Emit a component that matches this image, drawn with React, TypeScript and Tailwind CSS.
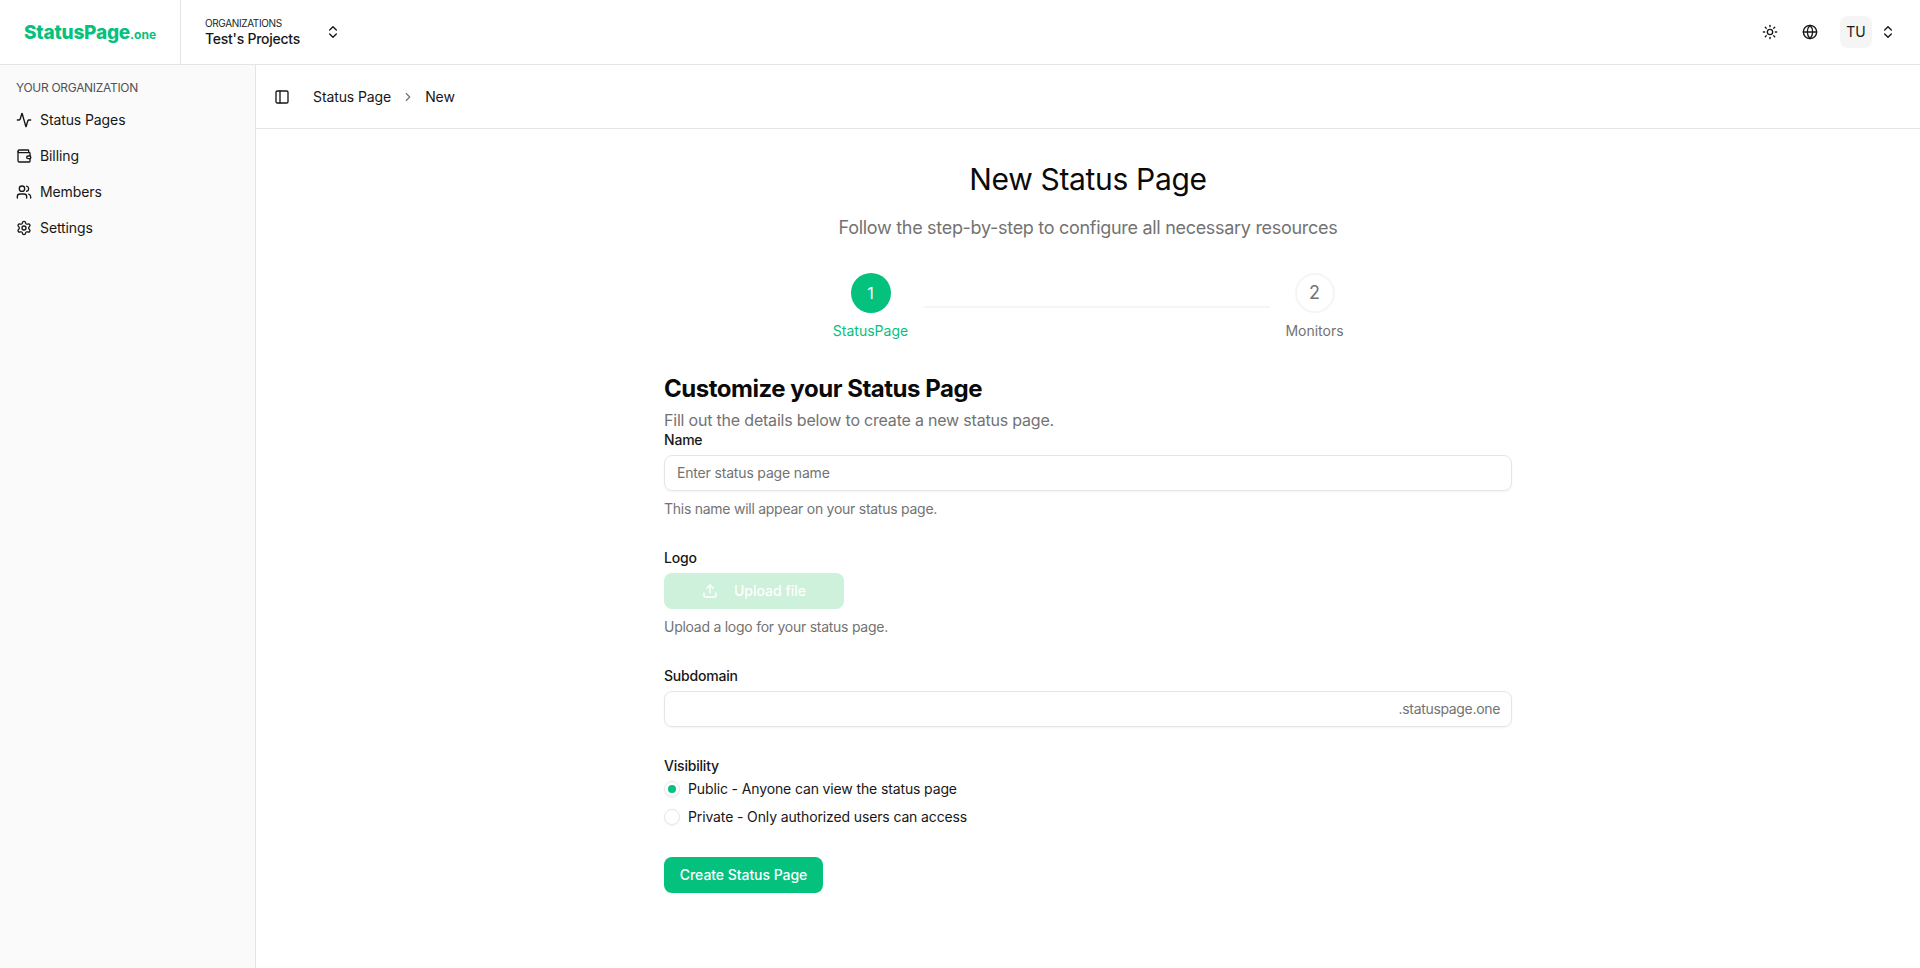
import { Activity, ChevronRight, ChevronsUpDown, Globe, PanelLeft, Settings, Sun, Upload, Users, Wallet } from 'lucide-react';

const navItems = [
  { label: 'Status Pages', icon: Activity },
  { label: 'Billing', icon: Wallet },
  { label: 'Members', icon: Users },
  { label: 'Settings', icon: Settings },
];

const App = () => {
  return (
    <div className="h-screen flex flex-col overflow-hidden bg-white text-[#171717] font-['Inter',sans-serif]">
      {/* Top bar */}
      <header className="h-[65px] shrink-0 flex items-center border-b border-[#e5e5e5]">
        <div className="w-[181px] h-full flex items-center pl-6 pt-[2px] border-r border-[#e5e5e5]">
          <span className="text-[#05c17e] text-[19px] font-extrabold tracking-[-0.2px]">
            StatusPage<span className="text-[12px] font-bold tracking-normal">.one</span>
          </span>
        </div>
        <div className="flex items-center pl-6">
          <div className="w-[118px]">
            <div className="text-[10px] leading-[14px] text-[#262626] tracking-[-0.37px]">ORGANIZATIONS</div>
            <div className="text-sm leading-[18px] font-medium tracking-[-0.25px]">Test's Projects</div>
          </div>
          <ChevronsUpDown className="w-4 h-4 ml-[2px]" strokeWidth={2} />
        </div>
        <div className="ml-auto flex items-center pr-[24px]">
          <Sun className="w-4 h-4 text-[#171717] mr-6" strokeWidth={2} />
          <Globe className="w-4 h-4 text-[#171717] mr-[22px]" strokeWidth={2} />
          <div className="w-8 h-8 rounded-lg bg-[#f5f5f5] flex items-center justify-center text-sm">TU</div>
          <ChevronsUpDown className="w-4 h-4 ml-2" strokeWidth={2} />
        </div>
      </header>

      <div className="flex-1 flex min-h-0">
        {/* Sidebar */}
        <aside className="w-[256px] shrink-0 bg-[#fafafa] border-r border-[#e5e5e5] px-4 pt-[15px]">
          <div className="text-xs leading-4 text-[#525252] mb-[6px] tracking-[-0.3px]">YOUR ORGANIZATION</div>
          <nav className="flex flex-col">
            {navItems.map((item) => {
              const Icon = item.icon;
              return (
                <div key={item.label} className="h-9 flex items-center gap-2 text-sm tracking-[-0.1px]">
                  <Icon className="w-4 h-4" strokeWidth={2} />
                  <span>{item.label}</span>
                </div>
              );
            })}
          </nav>
        </aside>

        <main className="flex-1 min-w-0 flex flex-col">
          {/* Breadcrumb bar */}
          <div className="h-16 shrink-0 flex items-center pl-[18px] border-b border-[#e5e5e5] text-sm tracking-[-0.1px]">
            <PanelLeft className="w-4 h-4 mr-[23px]" strokeWidth={2} />
            <span>Status Page</span>
            <ChevronRight className="w-[14px] h-[14px] mx-[10px] text-[#737373]" strokeWidth={2} />
            <span>New</span>
          </div>

          <div className="flex-1 flex flex-col items-center pt-8">
            <h1 className="text-[30px] leading-9 text-[#0a0a0a] tracking-[-0.33px]">New Status Page</h1>
            <p className="mt-[17px] text-lg leading-7 text-[#737373] tracking-[-0.3px]">Follow the step-by-step to configure all necessary resources</p>

            {/* Stepper */}
            <div className="mt-[31px] flex items-start">
              <div className="w-[75px] flex flex-col items-center">
                <div className="w-10 h-10 rounded-full bg-[#05c17e] text-white flex items-center justify-center text-base">1</div>
                <span className="mt-2 text-sm leading-5 text-[#05c17e]">StatusPage</span>
              </div>
              <div className="w-[346px] h-[2px] mt-[33px] mx-4 bg-[#f5f5f5]" />
              <div className="w-[57px] flex flex-col items-center">
                <div className="w-10 h-10 rounded-full border-2 border-[#f5f5f5] text-[#737373] flex items-center justify-center text-lg">2</div>
                <span className="mt-2 text-sm leading-5 text-[#737373]">Monitors</span>
              </div>
            </div>

            {/* Form */}
            <form className="w-[848px] mt-[32px]">
              <h2 className="text-2xl leading-8 font-bold text-[#0a0a0a] tracking-[-0.47px]">Customize your Status Page</h2>
              <p className="mt-[3px] -mb-px text-base leading-6 text-[#737373] tracking-[-0.2px]">Fill out the details below to create a new status page.</p>

              <label className="block text-sm leading-[18px] font-medium tracking-[-0.2px]">Name</label>
              <div className="mt-[6px] h-9 rounded-lg border border-[#e5e5e5] shadow-xs flex items-center px-3 text-sm text-[#737373] tracking-[-0.17px]">Enter status page name</div>
              <p className="mt-[8px] text-sm leading-5 text-[#737373] tracking-[-0.26px]">This name will appear on your status page.</p>

              <label className="block mt-[30px] text-sm leading-[18px] font-medium tracking-[-0.2px]">Logo</label>
              <div className="mt-[6px] w-[180px] h-9 rounded-lg bg-[#cdf1da] text-white text-sm font-medium flex items-center justify-center gap-[16px]">
                <Upload className="w-4 h-4" strokeWidth={2} />
                <span>Upload file</span>
              </div>
              <p className="mt-[8px] text-sm leading-5 text-[#737373] tracking-[-0.26px]">Upload a logo for your status page.</p>

              <label className="block mt-[30px] text-sm leading-[18px] font-medium tracking-[-0.2px]">Subdomain</label>
              <div className="mt-[6px] h-9 rounded-lg border border-[#e5e5e5] shadow-xs flex items-center justify-end pl-3 pr-[11px] text-sm text-[#737373] tracking-[-0.33px]">.statuspage.one</div>

              <label className="block mt-[30px] text-sm leading-[18px] font-medium tracking-[-0.2px]">Visibility</label>
              <div className="mt-[4px] h-5 flex items-center gap-2 text-sm tracking-[-0.13px]">
                <span className="w-4 h-4 rounded-full border border-[#e5e5e5] shadow-xs flex items-center justify-center">
                  <span className="w-2 h-2 rounded-full bg-[#05c17e]" />
                </span>
                Public - Anyone can view the status page
              </div>
              <div className="mt-2 h-5 flex items-center gap-2 text-sm tracking-[-0.13px]">
                <span className="w-4 h-4 rounded-full border border-[#e5e5e5] shadow-xs" />
                Private - Only authorized users can access
              </div>

              <button type="button" className="mt-[30px] w-[159px] h-9 rounded-lg bg-[#05c17e] text-white text-sm font-medium tracking-[-0.05px]">Create Status Page</button>
            </form>
          </div>
        </main>
      </div>
    </div>
  );
};

export default App;
